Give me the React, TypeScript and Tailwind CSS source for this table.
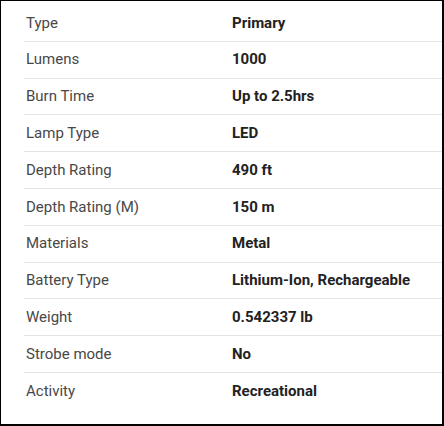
const specs: [string, string][] = [
  ['Type', 'Primary'],
  ['Lumens', '1000'],
  ['Burn Time', 'Up to 2.5hrs'],
  ['Lamp Type', 'LED'],
  ['Depth Rating', '490 ft'],
  ['Depth Rating (M)', '150 m'],
  ['Materials', 'Metal'],
  ['Battery Type', 'Lithium-Ion, Rechargeable'],
  ['Weight', '0.542337 lb'],
  ['Strobe mode', 'No'],
  ['Activity', 'Recreational'],
]

export default function App() {
  return (
    <div className="w-[444px] h-[426px] bg-white border-l border-t border-r-2 border-b-2 border-black pt-[4px] pl-[23px] font-['Roboto',sans-serif] text-[15px]">
      {specs.map(([label, value], i) => (
        <div
          key={label}
          className={`flex items-center h-[36.8px] ${i < specs.length - 1 ? 'border-b border-[#e4e4e4]' : ''}`}
        >
          <div className="w-[208px] pl-[2px] text-[#484848]">{label}</div>
          <div className="font-bold text-[#222]">{value}</div>
        </div>
      ))}
    </div>
  )
}
